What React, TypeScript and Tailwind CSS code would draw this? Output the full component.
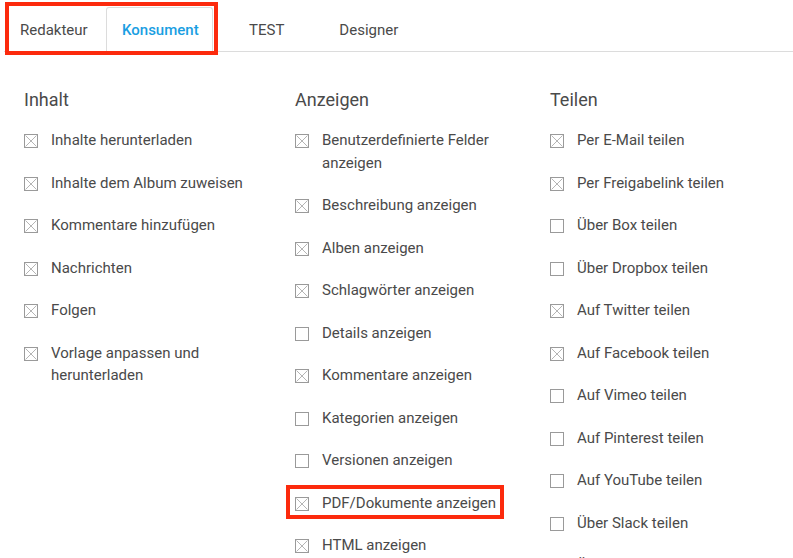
import type { ReactNode } from 'react';

type Item = { label: ReactNode; checked: boolean; highlight?: boolean };

const columns: { title: string; width: string; items: Item[] }[] = [
  {
    title: 'Inhalt',
    width: 'w-[271px]',
    items: [
      { label: 'Inhalte herunterladen', checked: true },
      { label: 'Inhalte dem Album zuweisen', checked: true },
      { label: 'Kommentare hinzufügen', checked: true },
      { label: 'Nachrichten', checked: true },
      { label: 'Folgen', checked: true },
      { label: 'Vorlage anpassen und herunterladen', checked: true },
    ],
  },
  {
    title: 'Anzeigen',
    width: 'w-[255px]',
    items: [
      { label: 'Benutzerdefinierte Felder anzeigen', checked: true },
      { label: 'Beschreibung anzeigen', checked: true },
      { label: 'Alben anzeigen', checked: true },
      { label: 'Schlagwörter anzeigen', checked: true },
      { label: 'Details anzeigen', checked: false },
      { label: 'Kommentare anzeigen', checked: true },
      { label: 'Kategorien anzeigen', checked: false },
      { label: 'Versionen anzeigen', checked: false },
      { label: 'PDF/Dokumente anzeigen', checked: true, highlight: true },
      { label: 'HTML anzeigen', checked: true },
    ],
  },
  {
    title: 'Teilen',
    width: 'flex-1',
    items: [
      { label: 'Per E-Mail teilen', checked: true },
      { label: 'Per Freigabelink teilen', checked: true },
      { label: 'Über Box teilen', checked: false },
      { label: 'Über Dropbox teilen', checked: false },
      { label: 'Auf Twitter teilen', checked: true },
      { label: 'Auf Facebook teilen', checked: true },
      { label: 'Auf Vimeo teilen', checked: false },
      { label: 'Auf Pinterest teilen', checked: false },
      { label: 'Auf YouTube teilen', checked: false },
      { label: 'Über Slack teilen', checked: false },
      { label: 'Über Teams teilen', checked: false },
    ],
  },
];

function CheckBox({ checked }: { checked: boolean }) {
  return (
    <svg width="14" height="14" viewBox="0 0 14 14" className="mt-[5px] shrink-0">
      <rect x="0.5" y="0.5" width="13" height="13" fill="white" stroke="#9a9a9a" />
      {checked && (
        <>
          <line x1="1.5" y1="1.5" x2="12.5" y2="12.5" stroke="#b5b5b5" strokeWidth="1" />
          <line x1="12.5" y1="1.5" x2="1.5" y2="12.5" stroke="#b5b5b5" strokeWidth="1" />
        </>
      )}
    </svg>
  );
}

export default function App() {
  return (
    <div className="min-h-[558px] bg-white text-[#4a4a4a]" style={{ fontFamily: 'Roboto, "Liberation Sans", sans-serif' }}>
      <div className="pl-1">
        <div className="flex h-[52px] items-end border-b border-[#dcdcdc]">
          <div className="relative flex">
            <div className="flex h-[44px] w-[102px] items-center pt-[3px] pl-4 text-[15px]">Redakteur</div>
            <div className="-mb-px flex h-[44px] w-[107px] items-center rounded-t-[3px] border border-b-0 border-[#dcdcdc] bg-white pt-[2px] pl-[15px] text-[15px] font-medium text-[#1a9ee2]">
              Konsument
            </div>
            <div className="pointer-events-none absolute -top-[5px] -right-[5px] -bottom-[4px] left-px border-[4px] border-[#fc2a0d]" />
          </div>
          <div className="flex h-[44px] items-center pt-[3px] pl-[36px] text-[15px]">TEST</div>
          <div className="flex h-[44px] items-center pt-[3px] pl-[55px] text-[15px]">Designer</div>
        </div>
      </div>
      <div className="flex px-6 pt-9">
        {columns.map((col) => (
          <div key={col.title} className={`${col.width} pr-5`}>
            <h2 className="text-[18px] leading-6">{col.title}</h2>
            <div className="mt-[17px] flex flex-col gap-5">
              {col.items.map((item, i) => (
                <div key={i} className={`relative flex items-start gap-[13px] ${item.highlight ? 'self-start' : ''}`}>
                  <CheckBox checked={item.checked} />
                  <span className="text-[15px] leading-[22.5px]">{item.label}</span>
                  {item.highlight && (
                    <div className="pointer-events-none absolute -top-[7px] -bottom-[5px] -left-[9px] -right-[8px] border-[4px] border-[#fc2a0d]" />
                  )}
                </div>
              ))}
            </div>
          </div>
        ))}
      </div>
    </div>
  );
}
